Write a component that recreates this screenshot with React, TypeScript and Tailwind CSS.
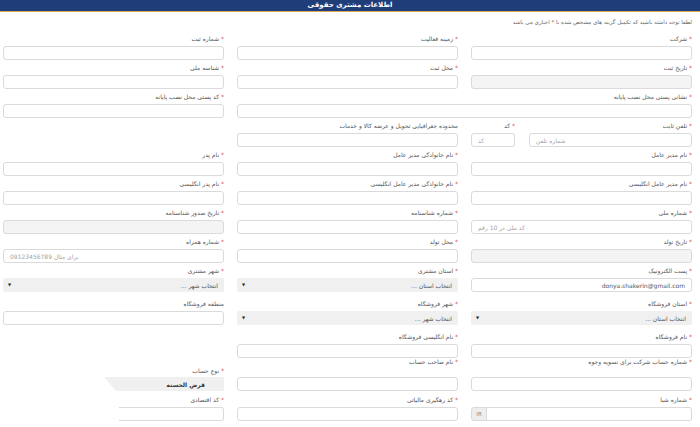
import React from "react";

type LabelProps = { text: string; req?: boolean; extra?: string };

function Label({ text, req = true, extra = "mb-[3px]" }: LabelProps) {
  return (
    <div className={`h-[8px] leading-[8px] text-[6px] text-[#555] whitespace-nowrap ${extra}`}>
      {req && <span className="text-[#e0463c]">*</span>}
      {req ? " " : ""}
      {text}
    </div>
  );
}

type BoxProps = { gray?: boolean; children?: React.ReactNode; ltr?: boolean };

function Box({ gray = false, children, ltr = false }: BoxProps) {
  return (
    <div
      dir={ltr ? "ltr" : "rtl"}
      className={`h-[14px] border border-[#dadada] rounded-[3px] flex items-center px-[6px] text-[6px] ${
        gray ? "bg-[#f4f4f4]" : "bg-white"
      }`}
    >
      {children}
    </div>
  );
}

function Field({ label, req = true, gray = false, children, ltr = false }: { label: string; req?: boolean; gray?: boolean; children?: React.ReactNode; ltr?: boolean }) {
  return (
    <div>
      <Label text={label} req={req} />
      <Box gray={gray} ltr={ltr}>
        {children}
      </Box>
    </div>
  );
}

function Ph({ text }: { text: string }) {
  return <span dir="rtl" className="text-[#a3a3a3] whitespace-nowrap">{text}</span>;
}

function Arrow() {
  return <span className="text-[4px] text-[#222] leading-none">▼</span>;
}

function SelectField({ label, text }: { label: string; text: string }) {
  return (
    <div>
      <Label text={label} />
      <div className="h-[14px] bg-[#f0f0f0] rounded-[2px] flex items-center justify-between pr-[6px] pl-[5px] text-[6px]">
        <span className="text-[#555] whitespace-nowrap">{text}</span>
        <Arrow />
      </div>
    </div>
  );
}

function Empty() {
  return <div />;
}

export default function App() {
  return (
    <div dir="rtl" className="w-[700px] h-[427px] bg-white overflow-hidden font-['DejaVu_Sans',sans-serif]">
      <div className="h-[11px] bg-[#1f3e79] flex items-center justify-center">
        <span className="text-white font-bold text-[7px] leading-none">اطلاعات مشتری حقوقی</span>
      </div>
      <div className="h-[1px] bg-[#dcaa55]" />
      <div className="pr-[8px] pl-[3px]">
        <div className="mt-[6px] h-[8px] leading-[8px] text-[5.5px] text-[#666] whitespace-nowrap">
          لطفا توجه داشته باشید که تکمیل گزینه های مشخص شده با * اجباری می باشد
        </div>

        <div className="mt-[9px] flex flex-col gap-y-[4px]">
          {/* Row 1 */}
          <div className="grid grid-cols-[221px_221px_221px] gap-x-[13px]">
            <Field label="شرکت" />
            <Field label="زمینه فعالیت" />
            <Field label="شماره ثبت" />
          </div>
          {/* Row 2 */}
          <div className="grid grid-cols-[221px_221px_221px] gap-x-[13px]">
            <Field label="تاریخ ثبت" gray />
            <Field label="محل ثبت" />
            <Field label="شناسه ملی" />
          </div>
          {/* Row 3 */}
          <div className="grid grid-cols-[221px_221px_221px] gap-x-[13px]">
            <div className="col-span-2">
              <Field label="نشانی پستی محل نصب پایانه" />
            </div>
            <Field label="کد پستی محل نصب پایانه" />
          </div>
          {/* Row 4 */}
          <div className="grid grid-cols-[221px_221px_221px] gap-x-[13px]">
            <div className="flex gap-x-[14px]">
              <div className="flex-1">
                <Field label="تلفن ثابت" ltr>
                  <Ph text="شماره تلفن" />
                </Field>
              </div>
              <div className="w-[44px]">
                <Field label="کد" ltr>
                  <Ph text="کد" />
                </Field>
              </div>
            </div>
            <Field label="محدوده جغرافیایی تحویل و عرضه کالا و خدمات" req={false} />
            <Empty />
          </div>
          {/* Row 5 */}
          <div className="grid grid-cols-[221px_221px_221px] gap-x-[13px]">
            <Field label="نام مدیر عامل" />
            <Field label="نام خانوادگی مدیر عامل" />
            <Field label="نام پدر" />
          </div>
          {/* Row 6 */}
          <div className="grid grid-cols-[221px_221px_221px] gap-x-[13px]">
            <Field label="نام مدیر عامل انگلیسی" />
            <Field label="نام خانوادگی مدیر عامل انگلیسی" />
            <Field label="نام پدر انگلیسی" />
          </div>
          {/* Row 7 */}
          <div className="grid grid-cols-[221px_221px_221px] gap-x-[13px]">
            <Field label="شماره ملی" ltr>
              <Ph text="کد ملی در 10 رقم" />
            </Field>
            <Field label="شماره شناسنامه" />
            <Field label="تاریخ صدور شناسنامه" gray />
          </div>
          {/* Row 8 */}
          <div className="grid grid-cols-[221px_221px_221px] gap-x-[13px]">
            <Field label="تاریخ تولد" gray />
            <Field label="محل تولد" />
            <Field label="شماره همراه" ltr>
              <Ph text="برای مثال 09123456789" />
            </Field>
          </div>
          {/* Row 9 */}
          <div className="grid grid-cols-[221px_221px_221px] gap-x-[13px]">
            <Field label="پست الکترونیک">
              <span dir="ltr" className="text-[#555] whitespace-nowrap">donya.shakerin@gmail.com</span>
            </Field>
            <SelectField label="استان مشتری" text="انتخاب استان ..." />
            <SelectField label="شهر مشتری" text="انتخاب شهر ..." />
          </div>
          {/* Row 10 */}
          <div className="mt-[4px] grid grid-cols-[221px_221px_221px] gap-x-[13px]">
            <SelectField label="استان فروشگاه" text="انتخاب استان ..." />
            <SelectField label="شهر فروشگاه" text="انتخاب شهر ..." />
            <Field label="منطقه فروشگاه" req={false} />
          </div>
          {/* Row 11 */}
          <div className="mt-[4px] grid grid-cols-[221px_221px_221px] gap-x-[13px]">
            <Field label="نام فروشگاه" />
            <Field label="نام انگلیسی فروشگاه" />
            <Empty />
          </div>
          {/* Row 12 */}
          <div className="-mt-[4px] grid grid-cols-[221px_221px_221px] gap-x-[13px] items-end">
            <div>
              <Label text="شماره حساب شرکت برای تسویه وجوه" extra="mb-[11px]" />
              <Box />
            </div>
            <div>
              <Label text="نام صاحب حساب" extra="mb-[11px]" />
              <Box />
            </div>
            <div>
              <Label text="نوع حساب" extra="mb-[2px]" />
              <div className="flex justify-start">
                <div className="w-[120px] h-[14px] bg-[#f0f0f0] flex items-center pr-[19px] text-[6px] [clip-path:polygon(0_0,100%_0,100%_100%,12px_100%)]">
                  <span className="font-bold text-[#333] whitespace-nowrap">قرض الحسنه</span>
                </div>
              </div>
            </div>
          </div>
          {/* Row 13 */}
          <div className="mt-[1px] grid grid-cols-[221px_221px_221px] gap-x-[13px]">
            <div>
              <Label text="شماره شبا" />
              <div dir="ltr" className="flex h-[14px]">
                <div className="w-[16px] bg-[#eeeeee] border border-[#dadada] rounded-l-[3px] flex items-center justify-center text-[5.5px] text-[#888]">
                  IR
                </div>
                <div className="flex-1 bg-white border border-l-0 border-[#dadada] rounded-r-[3px]" />
              </div>
            </div>
            <Field label="کد رهگیری مالیاتی" />
            <div>
              <Label text="کد اقتصادی" />
              <div className="flex justify-start">
                <div className="w-[105px] h-[14px] bg-white border border-l-0 border-[#dadada] rounded-r-[3px]" />
              </div>
            </div>
          </div>
        </div>
      </div>
    </div>
  );
}
